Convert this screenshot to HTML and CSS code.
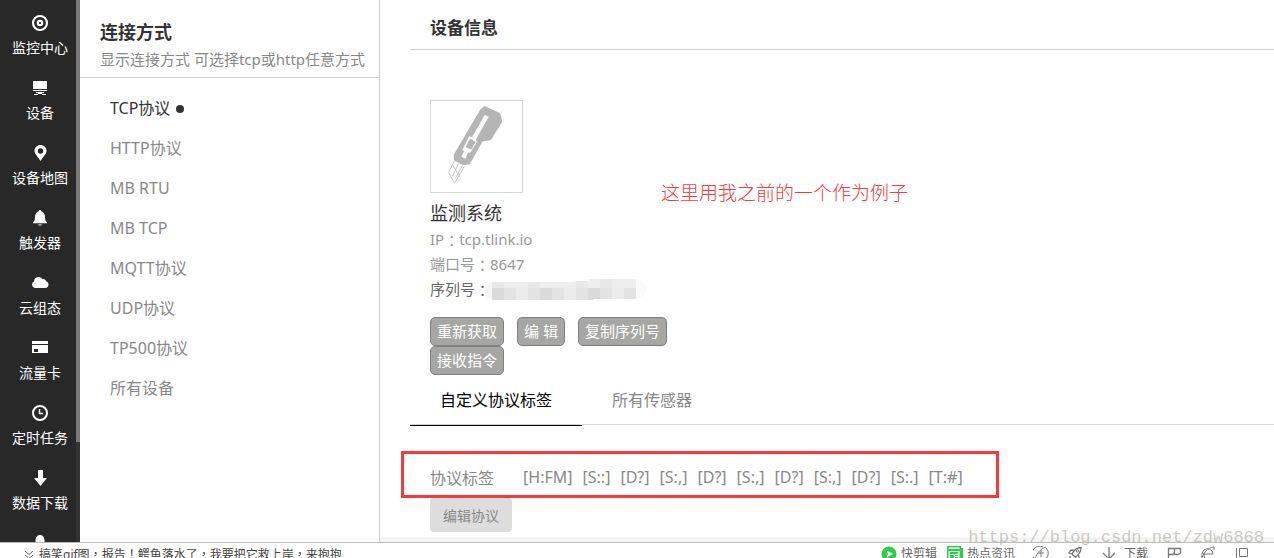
FILE: index.html
```html
<!DOCTYPE html>
<html lang="zh-CN">
<head>
<meta charset="utf-8">
<title>设备信息</title>
<link rel="stylesheet" href="styles.css">
</head>
<body>
<div class="app">
  <nav class="sidebar">
    <div class="side-list">
      <a class="side-item" href="#"><svg class="side-icon" viewBox="0 0 18 18"><circle cx="9" cy="9" r="7" fill="none" stroke="#fff" stroke-width="2.200"/><circle cx="9" cy="9" r="2.200" fill="none" stroke="#fff" stroke-width="2.200"/></svg><span>监控中心</span></a>
      <a class="side-item" href="#"><svg class="side-icon" viewBox="0 0 18 18"><path fill="#fff" d="M2 2h14v8H2zM2 11h14v1H2zM5 13h8v1H5zM3 15h4v1H3zM11 15h4v1h-4zM7 14h4v1H7z"/></svg><span>设备</span></a>
      <a class="side-item" href="#"><svg class="side-icon" viewBox="0 0 18 18"><path fill="#fff" fill-rule="evenodd" d="M9.500 1C6 1 3.500 3.500 3.500 6.700c0 3.300 3.500 6 6 10.300 2.500-4.300 6-7 6-10.300C15.500 3.500 13 1 9.500 1zm0 3.300a2.700 2.700 0 1 1 0 5.400 2.700 2.700 0 0 1 0-5.400z"/></svg><span>设备地图</span></a>
      <a class="side-item" href="#"><svg class="side-icon" viewBox="0 0 18 18"><path fill="#fff" d="M9 1c.8 0 1.200.6 1.300 1.300C13 3.300 14 5.500 14 8c0 3 .6 4.200 2 5.500v.7H2v-.7C3.400 12.200 4 11 4 8c0-2.500 1-4.700 3.700-5.700C7.800 1.600 8.200 1 9 1zM7 15.500h4c-.4 1.300-3.600 1.300-4 0z"/></svg><span>触发器</span></a>
      <a class="side-item" href="#"><svg class="side-icon" viewBox="0 0 18 18"><path fill="#fff" d="M4 14a3.300 3.300 0 0 1-.8-6.400C3 4.500 5 3 7.500 3c1.700 0 3 .8 3.800 2.100 2-.4 3.400.6 3.700 2.200 3.500.7 3.300 5.900-.3 6.700z"/></svg><span>云组态</span></a>
      <a class="side-item" href="#"><svg class="side-icon" viewBox="0 0 18 18"><path fill="#fff" fill-rule="evenodd" d="M1 2h16v3H1zM1 6h16v8H1zM3 10v3h4v-3z"/></svg><span>流量卡</span></a>
      <a class="side-item" href="#"><svg class="side-icon" viewBox="0 0 18 18"><circle cx="9" cy="9" r="7" fill="none" stroke="#fff" stroke-width="2"/><path d="M8.500 5v4.500H12" fill="none" stroke="#fff" stroke-width="1.500"/></svg><span>定时任务</span></a>
      <a class="side-item" href="#"><svg class="side-icon" viewBox="0 0 18 18"><path fill="#fff" d="M7 1h5v8h4l-6.500 8L3 9h4z"/></svg><span>数据下载</span></a>
      <a class="side-item" href="#" aria-label="用户"><svg class="side-icon" viewBox="0 0 18 18"><path fill="#fff" d="M4.500 6a4.500 5 0 0 1 9 0v4a4.500 4 0 0 1-9 0zM1 18c0-4 4-5 8-5s8 1 8 5z"/></svg></a>
    </div>
    <div class="side-track"><div class="side-thumb"></div></div>
  </nav>

  <aside class="panel">
    <header class="panel-head">
      <h2 class="panel-title">连接方式</h2>
      <p class="panel-sub">显示连接方式 可选择tcp或http任意方式</p>
    </header>
    <div class="proto-list">
      <a class="proto active" href="#">TCP协议<i class="dot"></i></a>
      <a class="proto" href="#">HTTP协议</a>
      <a class="proto" href="#">MB RTU</a>
      <a class="proto" href="#">MB TCP</a>
      <a class="proto" href="#">MQTT协议</a>
      <a class="proto" href="#">UDP协议</a>
      <a class="proto" href="#">TP500协议</a>
      <a class="proto" href="#">所有设备</a>
    </div>
  </aside>

  <main class="main">
    <h1 class="main-title">设备信息</h1>
    <section class="device">
      <div class="device-info">
        <svg class="device-pic" viewBox="0 0 93 93">
          <path fill="#b5b5b5" stroke="#b5b5b5" stroke-width="1.500" stroke-linejoin="round" d="M51 9 55 6 70 13 72 21 61 39 52 41 39 64 33 65 24 60 24 55z"/>
          <path fill="#fff" d="M55 14 59 16 46 39 47 42 40 53 38 53 35 59 31 57 34 51 32 50 39 36 42 37z"/>
          <path fill="#b5b5b5" stroke="#b5b5b5" stroke-width="1" d="M40 39 45 42 41 49 36 47z"/>
          <path fill="none" stroke="#c4c4c4" stroke-width="1" d="M24 61 18 73 24 84 34 67M22 65 29 77M28 64 22 77M32 66 25 79"/>
        </svg>
        <h3 class="device-name">监测系统</h3>
        <p class="meta">IP<span class="punct" lang="zh-TW">：</span>tcp.tlink.io</p>
        <p class="meta">端口号<span class="punct" lang="zh-TW">：</span>8647</p>
        <p class="meta serial">序列号<span class="punct" lang="zh-TW">：</span><svg class="mosaic" viewBox="0 0 162 22"><defs><clipPath id="smear"><path d="M8 3H89V2H105V0H152Q162 3 162 11Q161 19 152 20H109V21H8Q0 18 0 12Q1 5 8 3z"/></clipPath></defs><g clip-path="url(#smear)"><path fill="#f5f5f5" d="M0 0h162v22H0z"/><path fill="#e8e8e8" d="M8 3h12v6H8zM44 3h12v6H44zM92 2h12v7H92zM116 0h12v9h-12z"/><path fill="#eee" d="M20 3h24v6H20zM56 3h36v6H56zM104 0h12v9h-12zM128 0h24v9h-24z"/><path fill="#dadada" d="M8 9h12v13H8zM56 9h12v13H56zM104 9h12v13h-12z"/><path fill="#e3e3e3" d="M20 9h12v13H20zM44 9h12v13H44zM68 9h12v13H68zM92 9h12v13H92zM116 9h12v13h-12zM140 9h12v13h-12z"/><path fill="#ececec" d="M32 9h12v13H32zM80 9h12v13H80zM128 9h12v13h-12z"/><path fill="#f8fafc" d="M152 0h10v22h-10z"/></g></svg></p>
        <div class="actions">
          <button class="btn">重新获取</button><button class="btn">编 辑</button><button class="btn">复制序列号</button><button class="btn">接收指令</button>
        </div>
      </div>
      <p class="note">这里用我之前的一个作为例子</p>
    </section>
    <div class="tabs" role="tablist">
      <button class="tab selected" role="tab" aria-selected="true">自定义协议标签</button>
      <button class="tab" role="tab" aria-selected="false">所有传感器</button>
    </div>
    <div class="tag-box">
      <span class="tag-label">协议标签</span>
      <span>[H:FM]</span><span>[S::]</span><span>[D?]</span><span>[S:,]</span><span>[D?]</span><span>[S:,]</span><span>[D?]</span><span>[S:,]</span><span>[D?]</span><span>[S:.]</span><span>[T:#]</span>
    </div>
    <button class="edit">编辑协议</button>
    <div class="strip"></div>
  </main>

  <footer class="status">
    <svg class="chev" viewBox="0 0 8 8"><path d="M0 0 4 3.500 8 0M0 4 4 7.500 8 4" fill="none" stroke="#666"/></svg>
    <span class="news">搞笑gif图<span class="punct" lang="zh-TW">，</span>报告<span class="punct" lang="zh-TW">！</span>鳄鱼落水了<span class="punct" lang="zh-TW">，</span>我要把它救上岸<span class="punct" lang="zh-TW">，</span>来抱抱</span>
    <div class="tools">
      <a class="tool" href="#"><svg class="tool-icon" viewBox="0 0 16 16"><circle cx="8" cy="8" r="7.500" fill="#2bcf48"/><path d="M5.500 4.500 12 8l-6.500 3.500L7 8z" fill="#fff"/></svg>快剪辑</a>
      <a class="tool" href="#"><svg class="tool-icon" viewBox="0 0 16 16"><path fill="#2bcf48" d="M0 0h14v2h2v14H0z"/><path fill="#fff" d="M1.500 1.500h11V3h-11zM1.500 5h11v10h-11z"/><path fill="#2bcf48" d="M3 6h8v2H3zM3 9h4v5H3zM8 9h3v1H8zM8 11h3v1H8zM8 13h3v1H8z"/></svg>热点资讯</a>
      <a class="tool" href="#" aria-label="加速"><svg class="tool-icon" viewBox="0 0 16 16"><path d="M3 14A7 7 0 0 1 10 1M13 2a7 7 0 0 1-3 12M2 15C2 9 7 3 13 1M8 4v7M5 7h6" fill="none" stroke="#777"/></svg></a>
      <a class="tool" href="#" aria-label="火箭"><svg class="tool-icon" viewBox="0 0 16 16"><path d="M5 8C7 4 10 1.500 14 1.500 14 6 12 9 8 11zM5 8 2 7l2-3 3 .5M8 11l1 3 3-2-.5-3M3 10v3h3" fill="none" stroke="#777" stroke-width="1.300"/><circle cx="10.500" cy="5" r="1.300" fill="none" stroke="#777"/></svg></a>
      <a class="tool download" href="#"><svg class="tool-icon" viewBox="0 0 16 16"><path d="M8 1v12M2 7l6 6 6-6" fill="none" stroke="#777" stroke-width="1.300"/></svg>下载</a>
      <a class="tool" href="#" aria-label="标记"><svg class="tool-icon" viewBox="0 0 16 16"><path d="M2.500 15V2.500h12V7L12 8.500H9L8 7 7 8.500H3M8.500 3v4" fill="none" stroke="#777" stroke-width="1.300"/></svg></a>
      <a class="tool" href="#" aria-label="浏览器"><svg class="tool-icon" viewBox="0 0 16 16"><path d="M3 8h10A5.500 5.500 0 0 0 4 4C1 8 1 12 3 15M4 8c0 4 1 6 4 7M2 14C2 8 8 1 14 1v3" fill="none" stroke="#777"/></svg></a>
      <a class="tool" href="#" aria-label="窗口"><svg class="tool-icon" viewBox="0 0 16 16"><path d="M2.500 2v14M5.500 2.500h8v8h-8z" fill="none" stroke="#777"/></svg></a>
    </div>
  </footer>
  <span class="watermark">https://blog.csdn.net/zdw6868</span>
</div>
</body>
</html>
```
FILE: styles.css
```css
* { box-sizing: border-box; }
body {
  margin: 0;
  background: #fff;
  color: #888;
  font-family: "Noto Sans", "Noto Sans CJK SC", sans-serif;
  font-size: 16px;
}
h1, h2, h3, p { margin: 0; font-weight: 400; }
a { color: inherit; text-decoration: none; }
button { margin: 0; padding: 0; border: 0; background: none; color: inherit; font: inherit; cursor: pointer; }
svg { display: block; flex: none; }
.punct { font-family: "Noto Sans CJK TC", sans-serif; }

.app {
  position: relative;
  display: grid;
  grid-template-columns: 80px 300px 1fr;
  grid-template-rows: minmax(0, 1fr) 16px;
  height: 100vh;
  overflow: hidden;
}

.sidebar { display: flex; background: #282828; overflow: hidden; }
.side-list { flex: 1; min-width: 0; color: #fff; }
.side-item {
  display: flex;
  flex-direction: column;
  align-items: center;
  gap: 6px;
  width: 80px;
  height: 65px;
  padding-top: 14px;
  font-size: 14px;
  line-height: 20px;
}
.side-icon { width: 18px; height: 18px; }
.side-track { width: 4px; background: #333; }
.side-thumb { height: 81.6%; background: #7b7979; }

.panel { border-right: 1px solid #ccc; }
.panel-head { padding: 20px 0 4px 20px; border-bottom: 1px solid #ccc; white-space: nowrap; }
.panel-title { color: #333; font-size: 18px; font-weight: 700; line-height: 25px; }
.panel-sub { font-size: 15px; line-height: 28px; }
.proto-list { padding: 10px 0 0 30px; }
.proto { display: flex; align-items: center; gap: 6px; line-height: 40px; }
.proto.active { color: #333; }
.dot { width: 8px; height: 8px; margin-top: 2px; border-radius: 50%; background: #333; }

.main { display: flex; flex-direction: column; min-width: 0; }
.main-title {
  margin-left: 30px;
  padding: 6px 20px 0;
  border-bottom: 1px solid #ccc;
  color: #333;
  font-size: 17px;
  font-weight: 700;
  line-height: 43px;
}
.device { display: flex; gap: 1px; padding: 50px 50px 0; }
.device-info { width: 250px; flex: none; margin-right: -20px; }
.device-pic { width: 93px; height: 93px; border: 1px solid #d5d5d5; }
.device-name { margin-top: 6px; color: #333; font-size: 18px; line-height: 28px; }
.meta { display: flex; color: #999; font-size: 15px; line-height: 25px; white-space: nowrap; }
.serial { color: #666; }
.mosaic { width: 162px; height: 22px; margin: 2px 0 0 -6px; }
.actions { display: flex; flex-wrap: wrap; column-gap: 13px; padding-top: 15px; }
.btn {
  height: 29px;
  padding: 0 6px;
  border: 1px solid #808080;
  border-radius: 5px;
  background: #a6a6a5;
  color: #fff;
  font-size: 15px;
  line-height: 27px;
  white-space: nowrap;
}
.note {
  padding: 78px 0 0;
  color: #fb3838;
  font-family: "Noto Sans CJK SC", sans-serif;
  font-size: 19px;
  font-weight: 300;
  line-height: 28px;
  white-space: nowrap;
}

.tabs { display: flex; height: 50px; margin-left: 30px; border-bottom: 1px solid #d5d5d5; }
.tab { height: 51px; padding: 0 30px; border-bottom: 1px solid transparent; line-height: 50px; }
.tab.selected { border-bottom-color: #000; color: #000; }

.tag-box {
  display: flex;
  align-items: center;
  align-self: flex-start;
  gap: 10px;
  width: 598px;
  height: 47px;
  margin: 26px 0 0 21px;
  padding: 4px 0 0 26px;
  border: 3px solid #fb3838;
  white-space: nowrap;
}
.tag-label { margin-right: 19px; }
.edit {
  align-self: flex-start;
  height: 34px;
  margin-left: 50px;
  padding: 0 13px;
  border-radius: 4px;
  background: #ddd;
  font-size: 14px;
}
.strip { height: 5px; margin-top: auto; background: #f5f4f2; }

.status {
  grid-column: 1 / -1;
  display: flex;
  align-items: flex-start;
  padding-left: 25px;
  border-top: 1px solid #bbb;
  background: #fff;
  overflow: hidden;
  font-size: 12px;
  line-height: 22px;
}
.chev { width: 8px; height: 8px; margin: 8px 6px 0 0; }
.news { color: #444; }
.tools { display: flex; gap: 18px; margin-left: auto; padding-right: 24px; color: #666; }
.tool { display: flex; gap: 4px; }
.tool-icon { width: 16px; height: 16px; margin-top: 3px; }
.tool:nth-child(2) { margin-left: -8px; }
.download .tool-icon { margin-right: 3px; }
.watermark {
  position: absolute;
  right: 10px;
  bottom: 8px;
  color: rgba(150, 150, 140, 0.5);
  font-family: "Liberation Mono", monospace;
  font-size: 17px;
  line-height: 24px;
}
```
